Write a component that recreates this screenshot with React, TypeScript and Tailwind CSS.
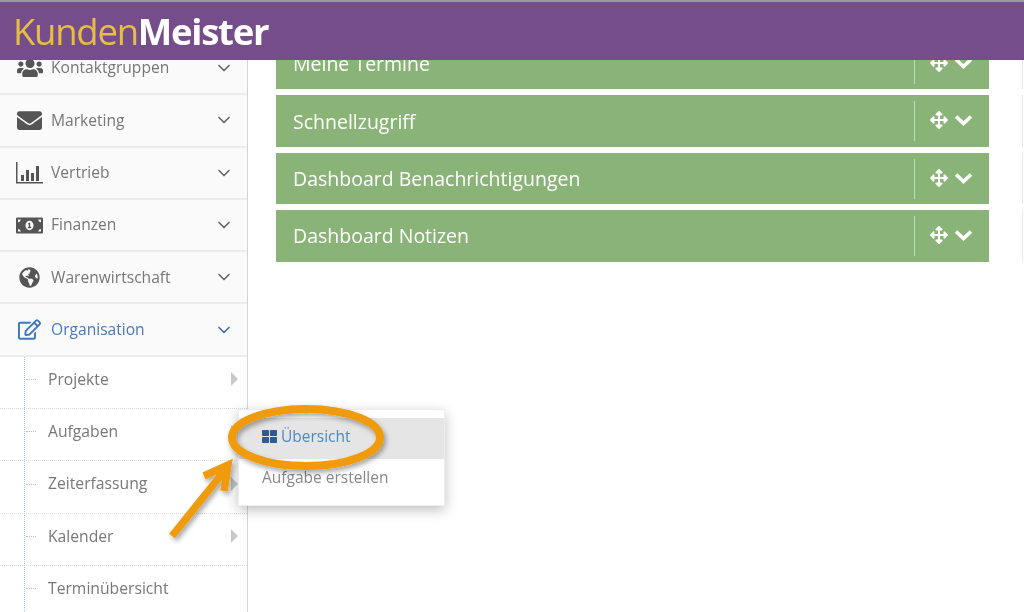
import { ChevronDown } from "lucide-react";
import type { ReactNode } from "react";
import {
  FaArrowsAlt,
  FaEnvelope,
  FaGlobeAmericas,
  FaMoneyBillAlt,
  FaRegEdit,
  FaThLarge,
  FaUsers,
} from "react-icons/fa";

function BarsIcon() {
  return (
    <svg width="27" height="22" viewBox="0 0 27 22" className="text-[#555]" fill="currentColor" aria-hidden="true">
      <path d="M0 0h1.5v20H27v1.6H0z" />
      <rect x="5" y="13" width="3" height="6" />
      <rect x="10" y="8" width="3" height="11" />
      <rect x="15" y="11" width="3" height="8" />
      <rect x="20" y="4" width="3" height="15" />
    </svg>
  );
}

const MAIN_ITEMS: { label: string; icon: ReactNode; active?: boolean }[] = [
  { label: "Kontaktgruppen", icon: <FaUsers size={26} className="text-[#555]" /> },
  { label: "Marketing", icon: <FaEnvelope size={25} className="text-[#555]" /> },
  { label: "Vertrieb", icon: <BarsIcon /> },
  { label: "Finanzen", icon: <FaMoneyBillAlt size={27} className="text-[#555]" /> },
  { label: "Warenwirtschaft", icon: <FaGlobeAmericas size={21} className="text-[#555]" /> },
  { label: "Organisation", icon: <FaRegEdit size={23} className="text-[#3f78b8]" />, active: true },
];

const SUB_ITEMS = [
  { label: "Projekte", arrow: true },
  { label: "Aufgaben", arrow: true },
  { label: "Zeiterfassung", arrow: true },
  { label: "Kalender", arrow: true },
  { label: "Terminübersicht", arrow: false },
];

const PANELS = ["Meine Termine", "Schnellzugriff", "Dashboard Benachrichtigungen", "Dashboard Notizen"];

function MainItem({ label, icon, active }: { label: string; icon: ReactNode; active?: boolean }) {
  return (
    <div className="flex h-[52.3px] items-center border-b-2 border-[#ececec] bg-[#fafafa] pl-4 pr-[13px]">
      <div className="flex w-[35px] shrink-0 items-center justify-center pr-2">{icon}</div>
      <span className={`flex-1 text-[15.6px] ${active ? "text-[#4a78b5]" : "text-[#777]"}`}>{label}</span>
      <ChevronDown size={20} strokeWidth={2} className={active ? "text-[#3f6ea8]" : "text-[#666]"} />
    </div>
  );
}

function SubItem({ label, arrow }: { label: string; arrow: boolean }) {
  return (
    <div className="flex h-[52.3px] items-center border-b border-dotted border-[#ddd] pb-[6px] pl-[26px] pr-[9px]">
      <div className="w-[10px] border-t border-dotted border-[#a9c6e4]" />
      <span className="ml-3 flex-1 text-[15.7px] text-[#777]">{label}</span>
      {arrow && <div className="h-0 w-0 border-y-[7px] border-l-[7px] border-y-transparent border-l-[#c8c8c8]" />}
    </div>
  );
}

function Panel({ title }: { title: string }) {
  return (
    <div className="flex items-stretch">
      <div className="flex h-[51.3px] w-[713px] items-center bg-[#8ab477] pl-[17px] text-[19.5px] text-white">
        <span className="flex-1">{title}</span>
        <div className="flex h-[40px] w-[75px] items-center gap-[6px] border-l border-[#c5d9bb] pb-[2px] pl-[15px]">
          <FaArrowsAlt size={18} />
          <svg width="19" height="12" viewBox="0 0 19 12" fill="none" stroke="currentColor" strokeWidth="3.6" aria-hidden="true">
            <path d="M2 2.5l7.5 7 7.5-7" />
          </svg>
        </div>
      </div>
      <div className="ml-[33px] w-px bg-[#e8e8e8]" />
    </div>
  );
}

export default function App() {
  return (
    <div className="relative h-[612px] w-[1024px] overflow-hidden bg-white font-['Open_Sans',sans-serif] blur-[0.4px]">
      <header className="relative z-10 flex h-[60px] items-center border-t-2 border-[#9a9a9a] bg-[#754d8b] pl-[13px]">
        <span className="text-[36.5px] font-medium leading-none tracking-[-1.25px] text-[#e7bd43]">
          Kunden<span className="font-bold text-white">Meister</span>
        </span>
      </header>

      <div className="flex h-[552px]">
        <aside className="relative w-[248px] shrink-0 border-r border-[#d5d5d5]">
          <div className="-mt-[17px]">
            {MAIN_ITEMS.map((item) => (
              <MainItem key={item.label} {...item} />
            ))}
            <div className="border-l border-dotted border-[#a9c6e4] [margin-left:24px]">
              <div className="-ml-[25px]">
                {SUB_ITEMS.map((item) => (
                  <SubItem key={item.label} {...item} />
                ))}
              </div>
            </div>
          </div>
        </aside>
        <main className="-mt-[22px] flex flex-1 flex-col gap-[6.2px] pl-[28px]">
          {PANELS.map((title) => (
            <Panel key={title} title={title} />
          ))}
        </main>
      </div>

      {/* flyout from the Aufgaben row */}
      <div className="absolute left-[238px] top-[409px] h-[97px] w-[207px] border border-[#eee] bg-white pt-[8px] shadow-[0_4px_12px_rgba(0,0,0,0.25)]">
        <div className="flex h-[41px] items-center gap-1 bg-[#e5e5e5] pb-1 pl-[23px] text-[15.5px] text-[#4a8ac4]">
          <FaThLarge size={15} className="text-[#2d5c94]" />
          <span>Übersicht</span>
        </div>
        <div className="flex h-[41px] items-center pb-1 pl-[23px] text-[15.5px] text-[#888]">Aufgabe erstellen</div>
      </div>

      {/* annotation drawn on top of the screenshot */}
      <svg className="absolute left-0 top-0" width="1024" height="612" fill="none" aria-hidden="true">
        <defs>
          <filter id="drop" x="-20%" y="-20%" width="140%" height="140%">
            <feDropShadow dx="2" dy="3" stdDeviation="2.5" floodColor="#000" floodOpacity="0.35" />
          </filter>
        </defs>
        <g stroke="#f09a0a" filter="url(#drop)">
          <ellipse cx="306" cy="437.5" rx="74" ry="28.5" strokeWidth="8" />
          <path d="M172 536 L226 469 M204 476 L228 465 L224 491" strokeWidth="7.5" />
        </g>
      </svg>
    </div>
  );
}
